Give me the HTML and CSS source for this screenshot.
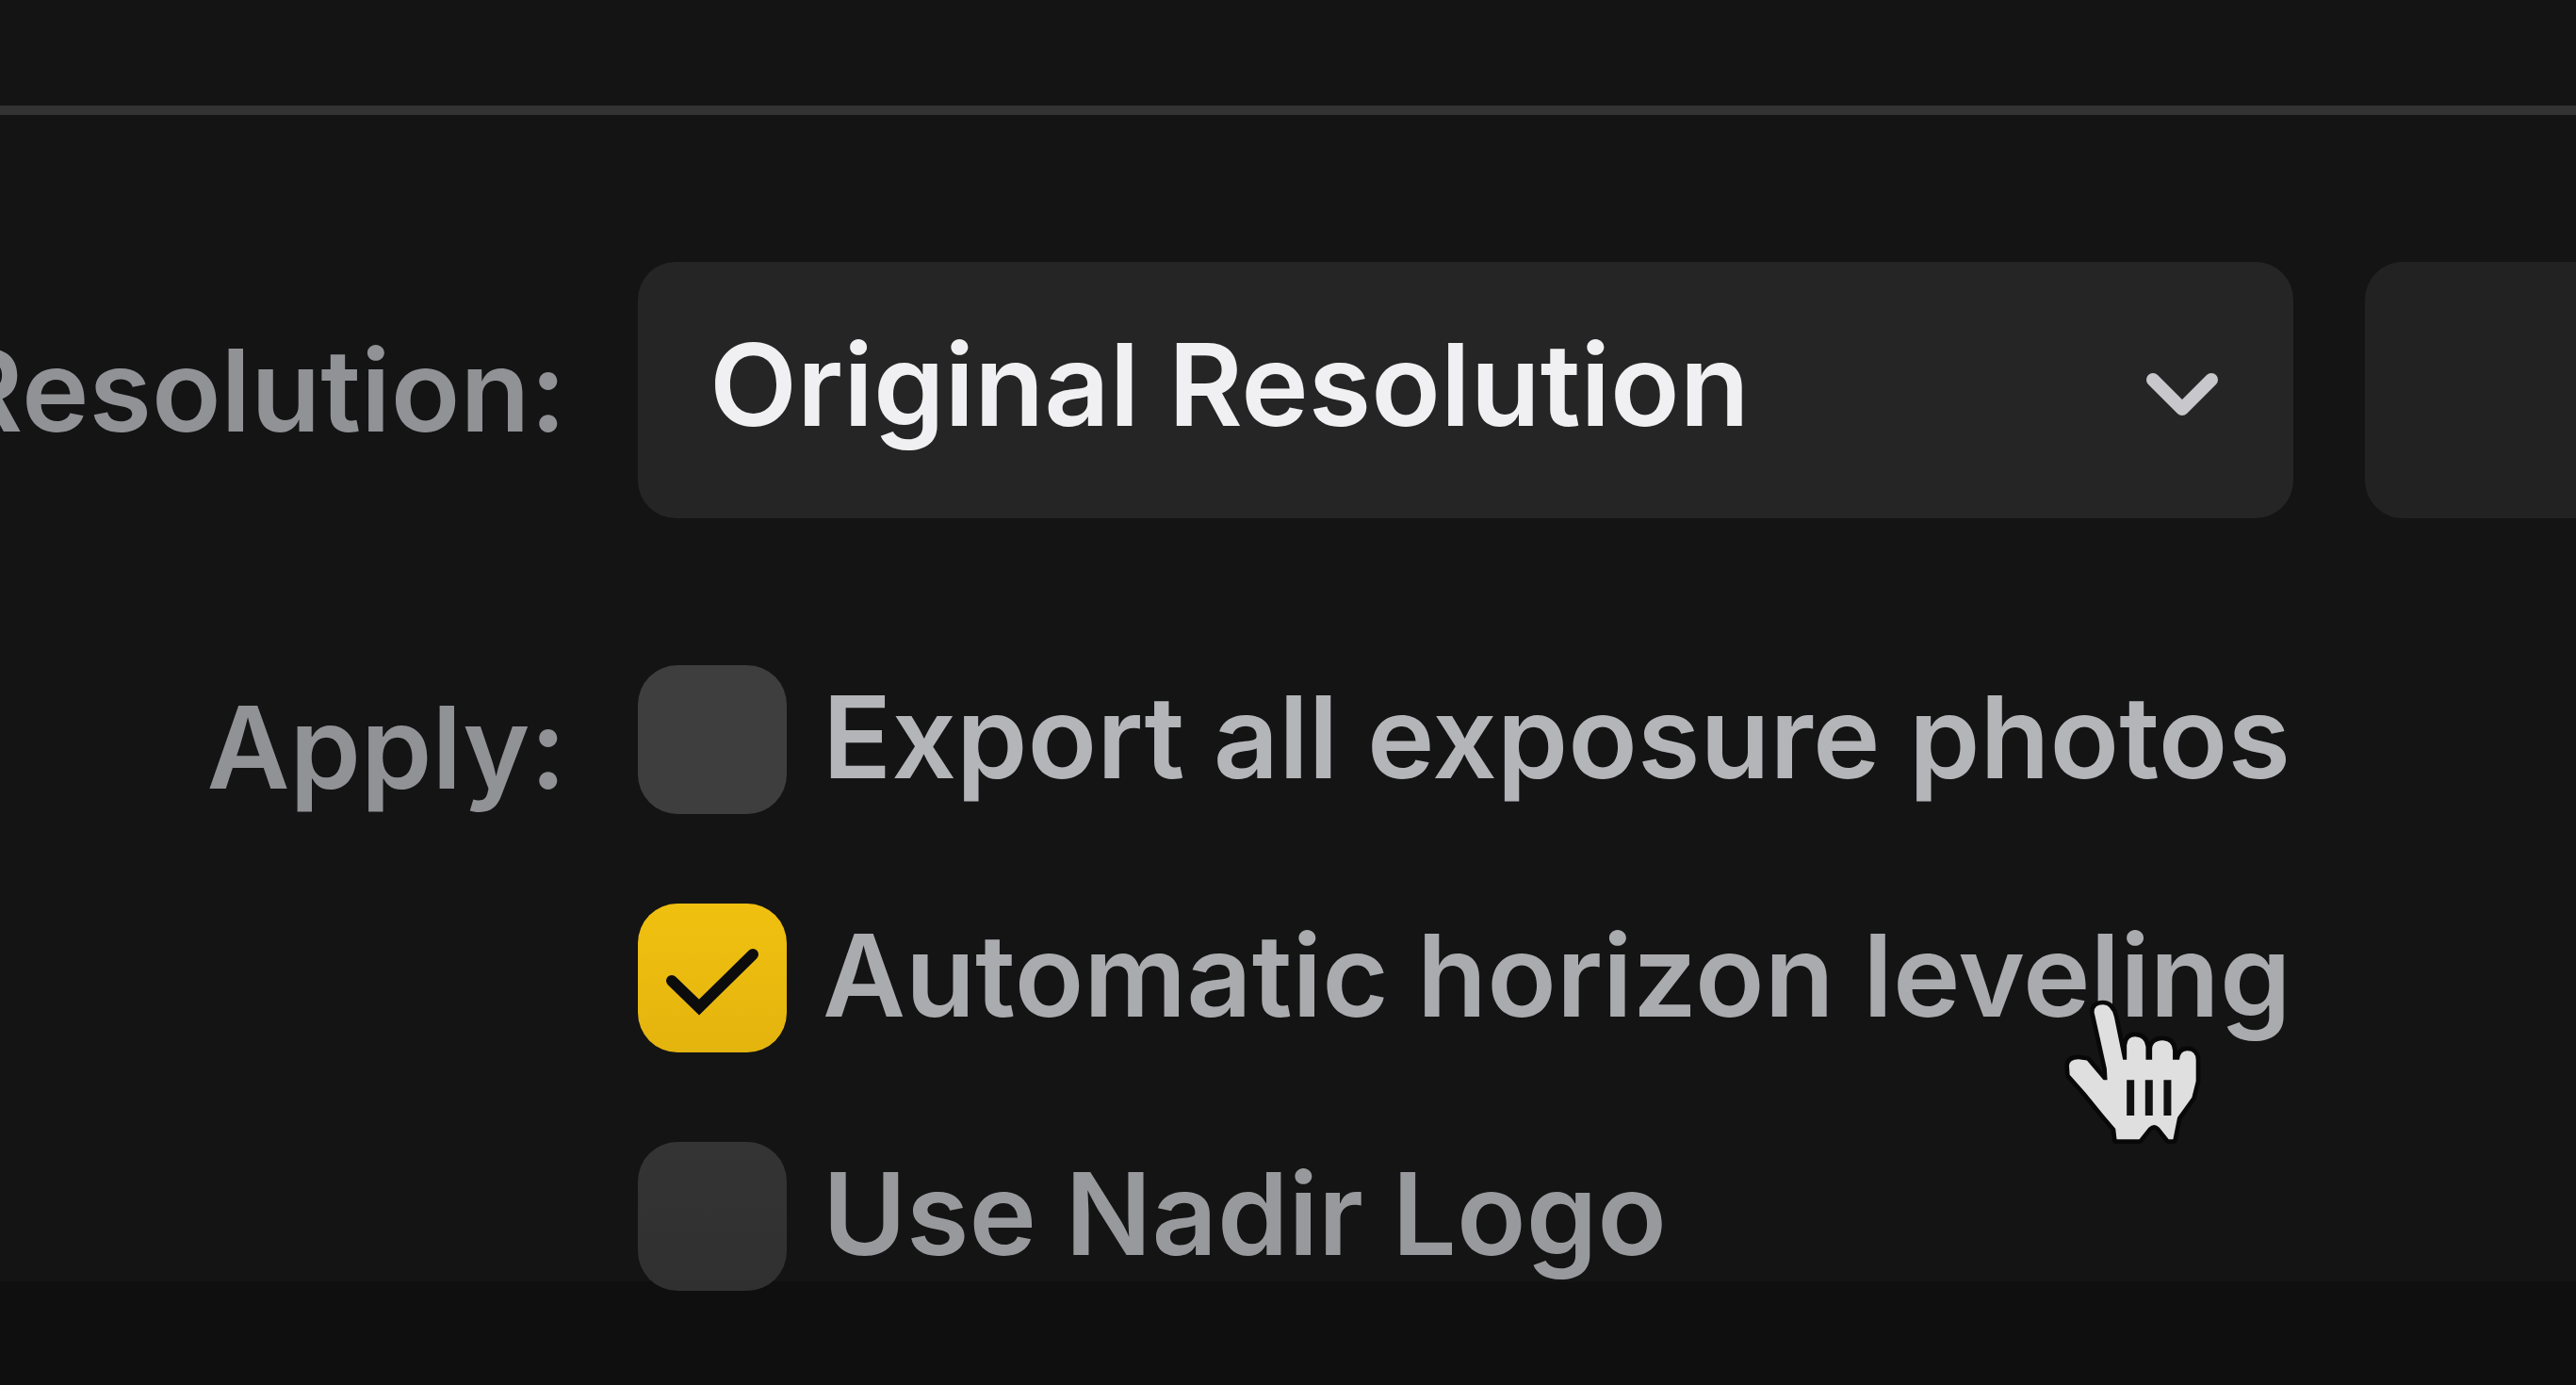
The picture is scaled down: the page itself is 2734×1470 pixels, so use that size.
FILE: index.html
```html
<!DOCTYPE html>
<html lang="en">
<head>
    <meta charset="UTF-8">
    <meta name="viewport" content="width=device-width, initial-scale=1.0">
    <link rel="stylesheet" href="styles.css">
    <title>Export</title>
</head>
<body>
<form class="export">
    <div class="export-header"></div>

    <div class="export-body">
        <div class="label-cell">
            <label class="label" for="resolution">Resolution:</label>
        </div>
        <div class="selects">
            <div class="select-box">
                <select class="select" id="resolution">
                    <option>Original Resolution</option>
                </select>
                <svg class="chevron" viewBox="0 0 84 56" aria-hidden="true">
                    <path d="M11 11 L42 42 L73 11"/>
                </svg>
            </div>
            <select class="select select_size" aria-label="Size"></select>
        </div>

        <div class="label-cell label-cell_apply">
            <span class="label" id="apply">Apply:</span>
        </div>
        <div class="checks" role="group" aria-labelledby="apply">
            <label class="check">
                <input class="check-input" type="checkbox">
                <span class="check-text">Export all exposure photos</span>
            </label>
            <label class="check check_hover">
                <input class="check-input" type="checkbox" checked>
                <svg class="check-mark" viewBox="0 0 158 158" aria-hidden="true">
                    <path d="M36 82 L65 110 L122 54"/>
                </svg>
                <span class="check-text">Automatic horizon leveling</span>
                <svg class="pointer" viewBox="255 285 460 490" aria-hidden="true">
                    <path class="pointer-hand" d="M368 340 Q368 316 396 316 Q422 316 432 355 L460 492 L472 492 L472 445 Q474 418 500 418 Q530 420 533 450 L533 492 L553 492 L553 455 Q556 430 588 430 Q618 432 619 462 L619 492 L640 492 Q642 464 664 463 Q692 462 693 492 L693 560 L680 612 L634 676 L620 746 L606 746 L576 708 Q560 692 542 708 L512 746 L440 746 L436 712 L400 670 L340 596 L290 540 L288 510 Q290 490 318 490 L345 494 L398 556 L410 556 L408 520 L386 420 Z"/>
                    <path class="pointer-line" d="M484 556 V670 M543 556 V670 M602 556 V670"/>
                </svg>
            </label>
            <label class="check check_dim">
                <input class="check-input" type="checkbox">
                <span class="check-text">Use Nadir Logo</span>
            </label>
        </div>
    </div>

    <div class="export-footer"></div>
</form>
</body>
</html>
```

FILE: styles.css
```css
body, html {
    margin: 0;
    padding: 0;
    height: 100%;
    background-color: #141414;
}

.export {
    display: flex;
    flex-direction: column;
    height: 100vh;
    overflow: hidden;
    font-family: "Inter", sans-serif;
    font-size: 121px;
    font-weight: 600;
    line-height: 158px;
    color: #b4b5b8;
}

.export-header {
    flex: none;
    height: 112px;
    border-bottom: 10px solid #333333;
}

.export-body {
    position: relative;
    z-index: 1;
    flex: 1;
    min-height: 0;
    display: grid;
    grid-template-columns: 601px 1fr;
    grid-template-rows: auto auto;
    align-content: start;
    column-gap: 76px;
    row-gap: 156px;
    padding-top: 156px;
}

.export-footer {
    flex: none;
    height: 110px;
    background-color: #0f0f0f;
}

/* labels */
.label-cell {
    display: flex;
    justify-content: flex-end;
    align-items: center;
    color: #919296;
    white-space: nowrap;
}

.label-cell_apply {
    align-items: flex-start;
    padding-top: 8px;
}

/* drop-downs */
.selects {
    display: flex;
    gap: 76px;
}

.select-box {
    position: relative;
    flex: 1;
}

.select {
    appearance: none;
    display: block;
    box-sizing: border-box;
    width: 100%;
    height: 272px;
    margin: 0;
    padding: 0 160px 12px 76px;
    border: none;
    border-radius: 40px;
    outline: none;
    background-color: #252526;
    color: #f0f0f2;
    font: inherit;
}

.select_size {
    flex: none;
    width: 224px;
    padding: 0;
    border-radius: 40px 0 0 40px;
    background-color: #222223;
}

.chevron {
    position: absolute;
    top: 114px;
    right: 76px;
    width: 84px;
    height: 56px;
    fill: none;
    stroke: #c8c8cc;
    stroke-width: 14;
    stroke-linecap: round;
    stroke-linejoin: round;
    pointer-events: none;
}

/* tick boxes */
.checks {
    display: flex;
    flex-direction: column;
    align-items: flex-start;
    gap: 95px;
}

.check {
    position: relative;
    display: flex;
    align-items: center;
    gap: 38px;
    height: 158px;
    white-space: nowrap;
}

.check_hover {
    color: #aaabae;
    cursor: pointer;
}

.check_dim {
    color: #98999c;
}

.check-text {
    padding-bottom: 6px;
}

.check-input {
    appearance: none;
    flex: none;
    width: 158px;
    height: 158px;
    margin: 0;
    border-radius: 42px;
    background-color: #3e3e3e;
}

.check-input:checked {
    background: linear-gradient(#f0c010, #e4b40e);
}

.check_dim .check-input {
    background: linear-gradient(#343434, #303030);
}

.check-mark {
    position: absolute;
    top: 0;
    left: 0;
    width: 158px;
    height: 158px;
    fill: none;
    stroke: #0c0c0c;
    stroke-width: 12;
    stroke-linecap: round;
}

.pointer {
    position: absolute;
    top: 97px;
    left: 1508px;
    width: 153px;
    height: 163px;
}

.pointer-hand {
    fill: #dfdfdf;
    stroke: #080808;
    stroke-width: 28;
    stroke-linejoin: round;
    paint-order: stroke;
}

.pointer-line {
    fill: none;
    stroke: #101010;
    stroke-width: 24;
}
```
